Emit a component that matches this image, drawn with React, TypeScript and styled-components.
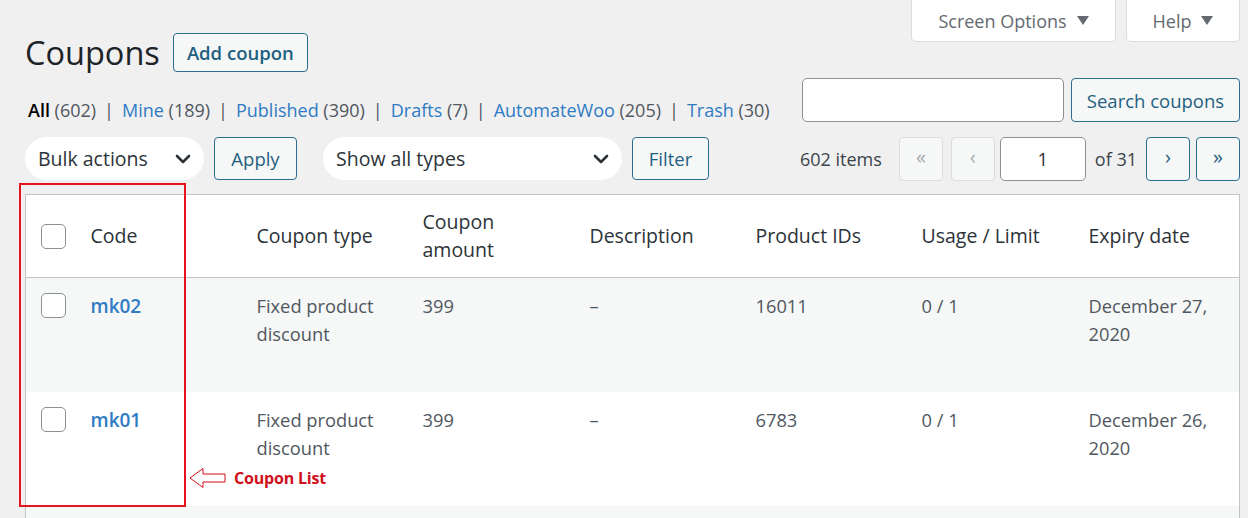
import React from "react";
import styled, { createGlobalStyle } from "styled-components";

const Global = createGlobalStyle`
  html, body { margin: 0; padding: 0; background: #f0f0f1; }
  body { font-family: "Open Sans", "Noto Sans", sans-serif; color: #3c434a; overflow: hidden; }
  * { box-sizing: border-box; }
`;

const Page = styled.div`
  padding: 0 8px 0 25px;
  width: 1248px;
  height: 518px;
  position: relative;
  overflow: hidden;
`;

const Top = styled.div`
  display: flex;
  justify-content: space-between;
  align-items: flex-start;
`;

const LeftCol = styled.div`
  display: flex;
  flex-direction: column;
  padding-top: 33px;
`;

const TitleRow = styled.div`
  display: flex;
  align-items: center;
  gap: 13px;
  height: 39px;
`;

const Title = styled.h1`
  margin: 0;
  font-size: 32.5px;
  font-weight: 400;
  color: #1d2327;
  line-height: 39px;
`;

const Button = styled.button<{ $h?: number; $w?: number; $bold?: boolean }>`
  height: ${(p) => p.$h ?? 43}px;
  ${(p) => (p.$w ? `width: ${p.$w}px;` : "padding: 0 13px;")}
  border: 1px solid #2a6f8f;
  background: #f6f7f7;
  color: #1f5f80;
  border-radius: 4px;
  font-family: inherit;
  font-size: 18.5px;
  font-weight: ${(p) => (p.$bold ? 600 : 400)};
  display: inline-flex;
  align-items: center;
  justify-content: center;
  flex-shrink: 0;
  padding: 0;
`;

const Links = styled.div`
  margin-top: 24px;
  margin-left: 3px;
  height: 28px;
  line-height: 28px;
  font-size: 18px;
  white-space: nowrap;
  color: #50575e;
`;

const LinkItem = styled.span<{ $current?: boolean }>`
  color: ${(p) => (p.$current ? "#000" : "#2f7bc4")};
  font-weight: ${(p) => (p.$current ? 600 : 400)};
`;

const Sep = styled.span`
  color: #50575e;
  margin: 0 8px;
`;

const RightCol = styled.div`
  display: flex;
  flex-direction: column;
  align-items: flex-end;
`;

const Tabs = styled.div`
  display: flex;
  gap: 10px;
`;

const Tab = styled.div<{ $w: number }>`
  width: ${(p) => p.$w}px;
  height: 42px;
  background: #fff;
  border: 1px solid #dcdcde;
  border-top: none;
  border-radius: 0 0 5px 5px;
  display: flex;
  align-items: center;
  justify-content: center;
  gap: 10px;
  color: #646970;
  font-size: 18px;
`;

const SearchRow = styled.div`
  margin-top: 36px;
  display: flex;
  gap: 7px;
`;

const SearchInput = styled.div`
  width: 262px;
  height: 44px;
  background: #fff;
  border: 1px solid #8c8f94;
  border-radius: 5px;
`;

const Toolbar = styled.div`
  margin-top: 13px;
  display: flex;
  align-items: center;
  height: 43px;
`;

const Select = styled.div<{ $w: number }>`
  width: ${(p) => p.$w}px;
  height: 43px;
  background: #fff;
  border-radius: 22px;
  display: flex;
  align-items: center;
  justify-content: space-between;
  padding: 0 11px 0 13px;
  font-size: 19.5px;
  color: #2c3338;
  flex-shrink: 0;
`;

const Group = styled.div<{ $ml?: number }>`
  display: flex;
  align-items: center;
  gap: 10px;
  margin-left: ${(p) => p.$ml ?? 0}px;
`;

const Pager = styled.div`
  margin-left: auto;
  display: flex;
  align-items: center;
  font-size: 18px;
  color: #3c434a;
`;

const PageLabel = styled.span<{ $ml?: number }>`
  margin-left: ${(p) => p.$ml ?? 0}px;
`;

const PageBtn = styled.div<{ $disabled?: boolean; $ml?: number }>`
  width: 44px;
  height: 44px;
  margin-left: ${(p) => p.$ml ?? 0}px;
  border-radius: 4px;
  border: 1px solid ${(p) => (p.$disabled ? "#dcdcde" : "#2a6f8f")};
  background: #f6f7f7;
  color: ${(p) => (p.$disabled ? "#a7aaad" : "#1f5f80")};
  display: flex;
  align-items: center;
  justify-content: center;
  font-size: 20px;
  line-height: 1;
  padding-bottom: 3px;
`;

const PageInput = styled.div`
  width: 86px;
  height: 44px;
  margin-left: 5px;
  background: #fff;
  border: 1px solid #8c8f94;
  border-radius: 5px;
  display: flex;
  align-items: center;
  justify-content: center;
  font-size: 18.5px;
  color: #2c3338;
`;

const Table = styled.table`
  margin-top: 14px;
  width: 1215px;
  border-collapse: collapse;
  table-layout: fixed;
  background: #fff;
  border: 1px solid #c3c4c7;
`;

const HeadRow = styled.tr`
  height: 83px;
  border-bottom: 1px solid #c3c4c7;
`;

const Th = styled.th<{ $w?: number }>`
  ${(p) => (p.$w ? `width: ${p.$w}px;` : "")}
  text-align: left;
  font-weight: 400;
  font-size: 19.5px;
  line-height: 28px;
  color: #2c3338;
  padding: 0 10px;
  vertical-align: middle;
`;

const Row = styled.tr<{ $alt?: boolean }>`
  height: 114px;
  background: ${(p) => (p.$alt ? "#f6f7f7" : "#fff")};
`;

const Td = styled.td`
  vertical-align: top;
  padding: 14px 10px;
  font-size: 18.3px;
  line-height: 28px;
  color: #50575e;
`;

const CheckCell = styled.td`
  vertical-align: top;
  padding: 15px 0 0 15px;
`;

const CheckTh = styled.th`
  width: 55px;
  padding: 0 0 0 15px;
  vertical-align: middle;
  text-align: left;
`;

const Check = styled.span`
  display: block;
  width: 25px;
  height: 25px;
  border: 1px solid #8c8f94;
  border-radius: 5px;
  background: #fff;
`;

const CodeLink = styled.span`
  color: #2f7bc4;
  font-weight: 600;
  font-size: 19px;
`;

const Annotation = styled.div`
  position: absolute;
  left: 19px;
  top: 183px;
  width: 167px;
  height: 324px;
  border: 2px solid #e3141c;
  pointer-events: none;
`;

const Callout = styled.div`
  position: absolute;
  left: 189px;
  top: 467px;
  display: flex;
  align-items: center;
  gap: 7px;
`;

const CalloutText = styled.span`
  font-family: "Open Sans", sans-serif;
  font-weight: 700;
  font-size: 16px;
  color: #d0101c;
  letter-spacing: -0.2px;
`;

const Chevron = () => (
  <svg width="20" height="20" viewBox="0 0 20 20">
    <path d="M4 7l6 6 6-6" fill="none" stroke="#2c3338" strokeWidth="2.6" strokeLinecap="round" strokeLinejoin="round" />
  </svg>
);

const Tri = () => (
  <svg width="12" height="10" viewBox="0 0 12 10">
    <path d="M0 0h12L6 9z" fill="#646970" />
  </svg>
);

const rows = [
  { code: "mk02", amount: "399", ids: "16011", date: ["December 27,", "2020"] },
  { code: "mk01", amount: "399", ids: "6783", date: ["December 26,", "2020"] },
];

export default function App() {
  return (
    <>
      <Global />
      <Page>
        <Top>
          <LeftCol>
            <TitleRow>
              <Title>Coupons</Title>
              <Button $h={39} $w={135} $bold>Add coupon</Button>
            </TitleRow>
            <Links>
              <LinkItem $current>All</LinkItem> (602)<Sep>|</Sep>
              <LinkItem>Mine</LinkItem> (189)<Sep>|</Sep>
              <LinkItem>Published</LinkItem> (390)<Sep>|</Sep>
              <LinkItem>Drafts</LinkItem> (7)<Sep>|</Sep>
              <LinkItem>AutomateWoo</LinkItem> (205)<Sep>|</Sep>
              <LinkItem>Trash</LinkItem> (30)
            </Links>
          </LeftCol>
          <RightCol>
            <Tabs>
              <Tab $w={205}>Screen Options <Tri /></Tab>
              <Tab $w={114}>Help <Tri /></Tab>
            </Tabs>
            <SearchRow>
              <SearchInput />
              <Button $h={44} $w={169}>Search coupons</Button>
            </SearchRow>
          </RightCol>
        </Top>
        <Toolbar>
          <Group>
            <Select $w={179}>Bulk actions <Chevron /></Select>
            <Button $w={83}>Apply</Button>
          </Group>
          <Group $ml={26}>
            <Select $w={299}>Show all types <Chevron /></Select>
            <Button $w={77}>Filter</Button>
          </Group>
          <Pager>
            <PageLabel>602 items</PageLabel>
            <PageBtn $disabled $ml={17}>«</PageBtn>
            <PageBtn $disabled $ml={8}>‹</PageBtn>
            <PageInput>1</PageInput>
            <PageLabel $ml={9}>of 31</PageLabel>
            <PageBtn $ml={9}>›</PageBtn>
            <PageBtn $ml={6}>»</PageBtn>
          </Pager>
        </Toolbar>
        <Table>
          <thead>
            <HeadRow>
              <CheckTh><Check /></CheckTh>
              <Th $w={166}>Code</Th>
              <Th $w={166}>Coupon type</Th>
              <Th $w={167}>Coupon<br />amount</Th>
              <Th $w={166}>Description</Th>
              <Th $w={166}>Product IDs</Th>
              <Th $w={167}>Usage / Limit</Th>
              <Th>Expiry date</Th>
            </HeadRow>
          </thead>
          <tbody>
            {rows.map((r, i) => (
              <Row key={r.code} $alt={i % 2 === 0}>
                <CheckCell><Check /></CheckCell>
                <Td><CodeLink>{r.code}</CodeLink></Td>
                <Td>Fixed product<br />discount</Td>
                <Td>{r.amount}</Td>
                <Td>–</Td>
                <Td>{r.ids}</Td>
                <Td>0 / 1</Td>
                <Td>{r.date[0]}<br />{r.date[1]}</Td>
              </Row>
            ))}
            <Row $alt>
              <CheckCell />
              <Td />
              <Td />
              <Td />
              <Td />
              <Td />
              <Td />
              <Td />
            </Row>
          </tbody>
        </Table>
        <Annotation />
        <Callout>
          <svg width="38" height="22" viewBox="0 0 38 22">
            <path d="M1 11L14 1.5v5.5h22v8H14v5.5z" fill="#fff" stroke="#d0101c" strokeWidth="1" strokeLinejoin="miter" />
          </svg>
          <CalloutText>Coupon List</CalloutText>
        </Callout>
      </Page>
    </>
  );
}
